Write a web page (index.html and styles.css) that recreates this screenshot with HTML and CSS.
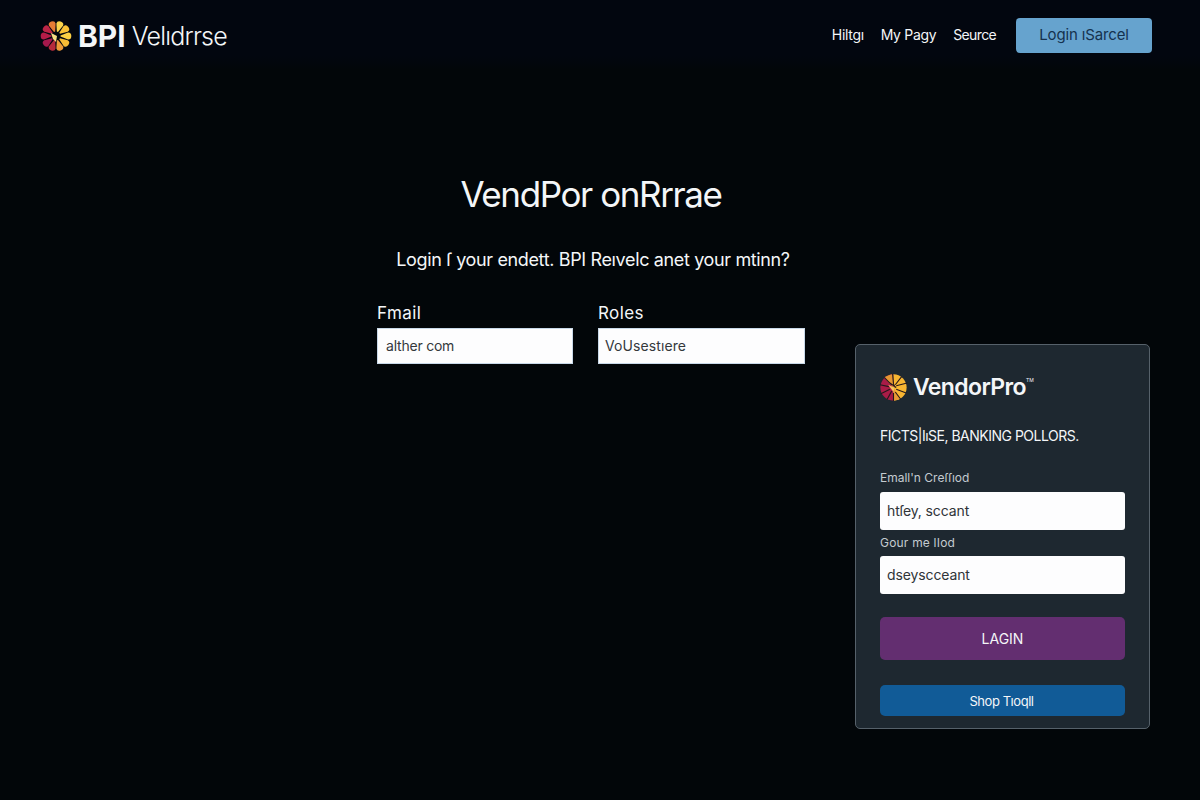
FILE: index.html
```html
<!DOCTYPE html>
<html lang="en">
<head>
<meta charset="utf-8">
<title>BPI</title>
<link rel="stylesheet" href="styles.css">
</head>
<body>
<svg width="0" height="0" class="defs" aria-hidden="true">
  <defs>
    <path id="petal" d="M-.6-4.5 L-3.5-12 Q-3.7-15.3 0-15.3 Q3.7-15.3 3.5-12 L.6-4.5Z"/>
    <g id="flower">
      <use href="#petal" transform="rotate(18)" fill="#fad34c"/>
      <use href="#petal" transform="rotate(54)" fill="#f9c136"/>
      <use href="#petal" transform="rotate(90)" fill="#fbd044"/>
      <use href="#petal" transform="rotate(126)" fill="#f8bc35"/>
      <use href="#petal" transform="rotate(162)" fill="#ed9a38"/>
      <use href="#petal" transform="rotate(198)" fill="#b52a3c"/>
      <use href="#petal" transform="rotate(234)" fill="#a5184c"/>
      <use href="#petal" transform="rotate(270)" fill="#b51c48"/>
      <use href="#petal" transform="rotate(306)" fill="#bd2546"/>
      <use href="#petal" transform="rotate(342)" fill="#e67c35"/>
      <path d="M-5-3 L1 0 L0 6 L-3 3Z" fill="#f6dc83"/>
    </g>
    <g id="disc">
      <path d="M0-14.5A14.5 14.5 0 0 0 0 14.5Z" fill="#a91c47"/>
      <path d="M0-14.5A14.5 14.5 0 0 1 0 14.5Z" fill="#f8b632"/>
      <path d="M0-14.5A14.5 14.5 0 0 0-10-10.5L0 0Z" fill="#e79632"/>
      <path d="M0 14.5A14.5 14.5 0 0 0 7 12.5L0 0Z" fill="#e79a34"/>
      <path d="M-6-3L1 0L0 5Z" fill="#f7c65c"/>
      <path d="M-1-15L0-4L2 0M2-3L9-12M3-2L15-5M3 2L14 6M2 5L8 13M0 6L0 15M-2 4L-7 13M-4 2L-14 7M-5-1L-15-3M-2-3L-10-11M-4-5L3 0" fill="none" stroke="#24171c" stroke-width="1.2"/>
    </g>
  </defs>
</svg>
<header class="topbar">
  <a class="brand">
    <svg class="brand-mark" viewBox="-16 -16 32 32"><use href="#flower"/></svg>
    <span class="brand-bold">BPI</span><span class="brand-light">Velıdrrse</span>
  </a>
  <nav class="nav">
    <a class="nav-link">Hiltgı</a>
    <a class="nav-link">My Pagy</a>
    <a class="nav-link source">Seurce</a>
    <a class="nav-button"><span>Login ıSarcel</span></a>
  </nav>
</header>
<main class="main">
  <section class="hero">
    <h1 class="title">VendPor onRrrae</h1>
    <p class="subtitle">Login ſ your endett. BPI Reıvelc anet your mtinn?</p>
    <div class="fields">
      <div class="field"><span class="field-label">Fmail</span><div class="field-box email"><span>alther com</span></div></div>
      <div class="field"><span class="field-label">Roles</span><div class="field-box role"><span>VoUsestıere</span></div></div>
    </div>
  </section>
  <aside class="card">
    <div class="card-brand">
      <svg class="card-mark" viewBox="-16 -16 32 32"><use href="#disc"/></svg>
      <span class="card-name">VendorPro</span><span class="tm">TM</span>
    </div>
    <p class="card-tagline">FICTS|IıSE, BANKING POLLORS.</p>
    <div class="card-label first">Emall'n Creſſıod</div>
    <div class="card-input">htſey, sccant</div>
    <div class="card-label second">Gour me lIod</div>
    <div class="card-input">dseyscceant</div>
    <div class="button-login">LAGIN</div>
    <div class="button-shop">Shop Tıoqll</div>
  </aside>
</main>
</body>
</html>
```
FILE: styles.css
```css
* { box-sizing: border-box; }
body { margin: 0; width: 1200px; height: 800px; overflow: hidden; background: #020609; color: #f4f6f8; font-family: Inter, "Liberation Sans", sans-serif; }
h1, p { margin: 0; font-weight: 400; white-space: nowrap; }
span, a { white-space: nowrap; }
.defs { display: block; }
.topbar { height: 70px; padding: 0 48px 0 40px; display: flex; justify-content: space-between; align-items: center; background: linear-gradient(#02060f 80%, #020609); }
.brand { display: flex; align-items: center; height: 100%; padding-top: 2px; }
.brand-mark { width: 32px; height: 32px; margin-right: 6px; }
.brand-bold { font-size: 30px; font-weight: 700; letter-spacing: 0; margin-right: 6px; }
.brand-light { font-size: 25px; font-weight: 300; letter-spacing: -.8px; }
.nav { display: flex; align-items: center; font-size: 14px; gap: 17px; }
.nav-link { letter-spacing: -.32px; padding-bottom: 2px; }
.source { letter-spacing: -.65px; }
.nav-button { width: 136px; height: 35px; border-radius: 4px; background: #66a3ce; color: #15324e; display: flex; align-items: center; justify-content: center; font-size: 15px; letter-spacing: -.15px; margin-left: 3px; padding-bottom: 2px; }
.main { display: grid; grid-template-columns: 428px 295px; column-gap: 50px; padding-left: 377px; }
.hero { padding-top: 99px; }
.title { font-size: 35px; line-height: 50px; text-align: center; letter-spacing: -1.4px; }
.subtitle { margin-top: 27px; padding-left: 4px; font-size: 18px; line-height: 28px; text-align: center; letter-spacing: -.36px; }
.fields { margin-top: 27px; display: grid; grid-template-columns: 196px 207px; column-gap: 25px; }
.field { display: flex; flex-direction: column; }
.field-label { font-size: 17px; line-height: 24px; height: 27px; letter-spacing: .4px; }
.field-box { height: 36px; display: flex; align-items: center; padding-bottom: 2px; background: #fdfdfe; color: #34383c; border: 1px solid #c8d8e8; font-size: 14px; }
.email { padding-left: 8px; letter-spacing: -.22px; }
.role { padding-left: 6px; letter-spacing: .1px; }
.card { margin-top: 274px; height: 385px; padding: 27px 24px 0; background: #1e2830; border: 1px solid #56616a; border-radius: 5px; }
.card-brand { display: flex; align-items: center; height: 30px; }
.card-mark { width: 29px; height: 29px; margin-left: -1px; margin-right: 5px; }
.card-name { font-size: 23px; font-weight: 600; letter-spacing: -.6px; }
.tm { font-size: 5px; align-self: flex-start; margin-top: 5px; }
.card-tagline { margin-top: 24px; font-size: 14px; line-height: 20px; letter-spacing: -.5px; }
.card-label { font-size: 12px; line-height: 16px; color: #c4cbd0; white-space: nowrap; }
.first { margin-top: 24px; margin-bottom: 6px; }
.second { margin-top: 5px; margin-bottom: 5px; letter-spacing: .2px; }
.card-input { height: 38px; border-radius: 3px; background: #fdfdfe; color: #303438; font-size: 14px; letter-spacing: -.12px; display: flex; align-items: center; padding: 0 7px 2px; }
.button-login, .button-shop { display: flex; align-items: center; justify-content: center; font-size: 14px; border-radius: 5px; }
.button-login { margin-top: 23px; height: 43px; background: #632e70; }
.button-shop { margin-top: 25px; height: 31px; background: #115b97; font-size: 13px; letter-spacing: -.45px; padding-right: 2px; }
```
